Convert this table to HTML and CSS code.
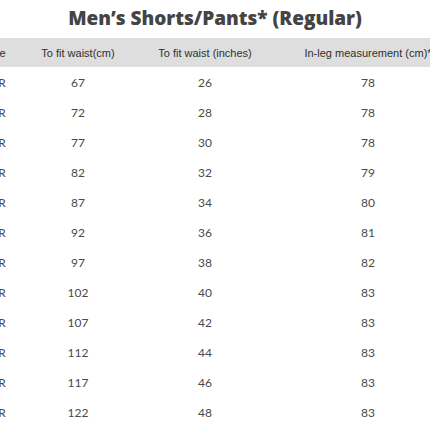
FILE: index.html
```html
<!DOCTYPE html>
<html>
<head>
<meta charset="utf-8">
<link rel="stylesheet" href="styles.css">
</head>
<body>
<div class="page">
  <h1 class="title">Men’s Shorts/Pants* (Regular)</h1>
  <table class="chart">
    <colgroup>
      <col class="c1"><col class="c2"><col class="c3"><col class="c4">
    </colgroup>
    <thead>
      <tr><th>Size</th><th>To fit waist(cm)</th><th>To fit waist (inches)</th><th>In-leg measurement (cm)*</th></tr>
    </thead>
    <tbody>
      <tr><td>26R</td><td>67</td><td>26</td><td>78</td></tr>
      <tr><td>28R</td><td>72</td><td>28</td><td>78</td></tr>
      <tr><td>30R</td><td>77</td><td>30</td><td>78</td></tr>
      <tr><td>32R</td><td>82</td><td>32</td><td>79</td></tr>
      <tr><td>34R</td><td>87</td><td>34</td><td>80</td></tr>
      <tr><td>36R</td><td>92</td><td>36</td><td>81</td></tr>
      <tr><td>38R</td><td>97</td><td>38</td><td>82</td></tr>
      <tr><td>40R</td><td>102</td><td>40</td><td>83</td></tr>
      <tr><td>42R</td><td>107</td><td>42</td><td>83</td></tr>
      <tr><td>44R</td><td>112</td><td>44</td><td>83</td></tr>
      <tr><td>46R</td><td>117</td><td>46</td><td>83</td></tr>
      <tr><td>48R</td><td>122</td><td>48</td><td>83</td></tr>
    </tbody>
  </table>
</div>
</body>
</html>
```
FILE: styles.css
```css
html, body {
  margin: 0;
  padding: 0;
  background: #fff;
}
.page {
  width: 430px;
  height: 430px;
  overflow: hidden;
}
.title {
  margin: 0;
  height: 38px;
  line-height: 37px;
  text-align: center;
  font-family: "Open Sans", "Liberation Sans", sans-serif;
  font-weight: 800;
  font-size: 19px;
  color: #444;
}
.chart {
  border-collapse: collapse;
  table-layout: fixed;
  width: 492px;
  margin-left: -26px;
}
.c1 { width: 42px; }
.c2 { width: 124px; }
.c3 { width: 130px; }
.c4 { width: 196px; }
.chart th {
  background: #dedede;
  height: 29px;
  padding: 0;
  font-family: "Liberation Sans", Arial, sans-serif;
  font-weight: 400;
  font-size: 11px;
  color: #2e2e2e;
  text-align: center;
  white-space: nowrap;
}
.chart td {
  height: 30px;
  padding: 0;
  font-family: "Lato", "Open Sans", sans-serif;
  font-size: 12px;
  color: #4a4a4a;
  text-align: center;
}
```
